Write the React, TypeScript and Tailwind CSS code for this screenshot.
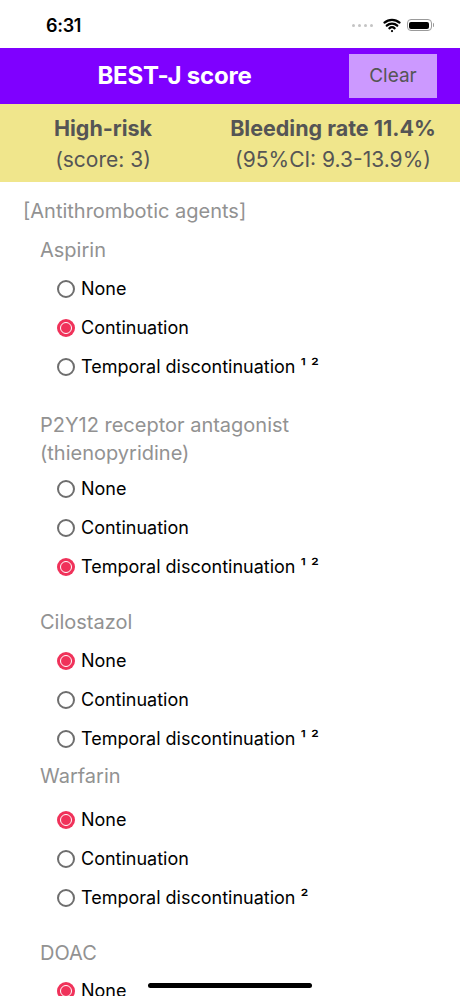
import { Wifi } from "lucide-react";

type Group = {
  title: string[];
  options: string[];
  selected: number;
  headTop: string;
  optTop: string;
};

const GROUPS: Group[] = [
  { title: ["Aspirin"], options: ["None", "Continuation", "Temporal discontinuation ¹ ²"], selected: 1, headTop: "mt-[11px]", optTop: "mt-[5px]" },
  { title: ["P2Y12 receptor antagonist", "(thienopyridine)"], options: ["None", "Continuation", "Temporal discontinuation ¹ ²"], selected: 2, headTop: "mt-[25px]", optTop: "mt-[2px]" },
  { title: ["Cilostazol"], options: ["None", "Continuation", "Temporal discontinuation ¹ ²"], selected: 0, headTop: "mt-[22px]", optTop: "mt-[5px]" },
  { title: ["Warfarin"], options: ["None", "Continuation", "Temporal discontinuation ²"], selected: 0, headTop: "mt-[4px]", optTop: "mt-[10px]" },
  { title: ["DOAC"], options: ["None", "Continuation", "Temporal discontinuation ²"], selected: 0, headTop: "mt-[22px]", optTop: "mt-[4px]" },
];

function Radio({ on }: { on: boolean }) {
  if (on) {
    return (
      <span className="w-[18px] h-[18px] rounded-full bg-[#f0325a] flex items-center justify-center shrink-0">
        <span className="w-[12px] h-[12px] rounded-full bg-[#f0325a] border-[1.5px] border-white" />
      </span>
    );
  }
  return <span className="w-[18px] h-[18px] rounded-full border-2 border-[#6e6e6e] shrink-0" />;
}

export default function App() {
  return (
    <div className="relative w-[460px] h-[996px] overflow-hidden bg-white font-['Inter',sans-serif]">
      {/* status bar */}
      <div className="h-[48px] flex items-center justify-between pl-[46px] pr-[26px]">
        <span className="text-[18px] font-semibold text-black tracking-[-0.3px] mt-[2px]">6:31</span>
        <div className="flex items-center gap-[6px] mt-[2px]">
          <div className="flex gap-[3px] mr-[4px]">
            <span className="w-[3px] h-[3px] rounded-full bg-[#c4c4c4]" />
            <span className="w-[3px] h-[3px] rounded-full bg-[#c4c4c4]" />
            <span className="w-[3px] h-[3px] rounded-full bg-[#c4c4c4]" />
            <span className="w-[3px] h-[3px] rounded-full bg-[#c4c4c4]" />
          </div>
          <Wifi size={18} strokeWidth={3} className="text-black" />
          <div className="flex items-center">
            <div className="w-[25px] h-[12px] rounded-[4px] border border-[#9a9a9a] p-[1.5px]">
              <div className="w-full h-full rounded-[2px] bg-black" />
            </div>
            <div className="w-[1.5px] h-[4px] bg-[#9a9a9a] rounded-r-sm ml-[1px]" />
          </div>
        </div>
      </div>

      {/* header */}
      <div className="h-[56px] bg-[#7f00ff] flex items-center">
        <div className="flex-1 text-center text-white font-bold text-[24px] tracking-[-0.2px]">BEST-J score</div>
        <button className="w-[88px] h-[44px] mr-[23px] bg-[#cc99ff] text-[#555] text-[19px]">Clear</button>
      </div>

      {/* result band */}
      <div className="h-[78px] bg-[#f0e68c] flex pt-[8px] text-[#555] text-[21px] leading-[32px]">
        <div className="w-[206px] text-center">
          <div className="font-bold text-[21.5px]">High-risk</div>
          <div>(score: 3)</div>
        </div>
        <div className="flex-1 text-center">
          <div className="font-bold text-[21.5px]">Bleeding rate 11.4%</div>
          <div>(95%CI: 9.3-13.9%)</div>
        </div>
      </div>

      {/* form */}
      <div className="pl-[23px] pt-[15px]">
        <div className="text-[20px] leading-[28px] text-[#929292]">[Antithrombotic agents]</div>
        {GROUPS.map((g) => (
          <div key={g.title[0]} className="pl-[17px]">
            <div className={`${g.headTop} text-[20px] leading-[28px] text-[#929292]`}>
              {g.title.map((t) => (
                <div key={t}>{t}</div>
              ))}
            </div>
            <div className={`${g.optTop} pl-[17px]`}>
              {g.options.map((o, i) => (
                <div key={o} className="h-[39px] flex items-center gap-[6px]">
                  <Radio on={i === g.selected} />
                  <span className="text-[18px] text-black">{o}</span>
                </div>
              ))}
            </div>
          </div>
        ))}
      </div>

      {/* home indicator */}
      <div className="absolute bottom-[8px] left-[148px] w-[164px] h-[5px] rounded-full bg-black" />
    </div>
  );
}
